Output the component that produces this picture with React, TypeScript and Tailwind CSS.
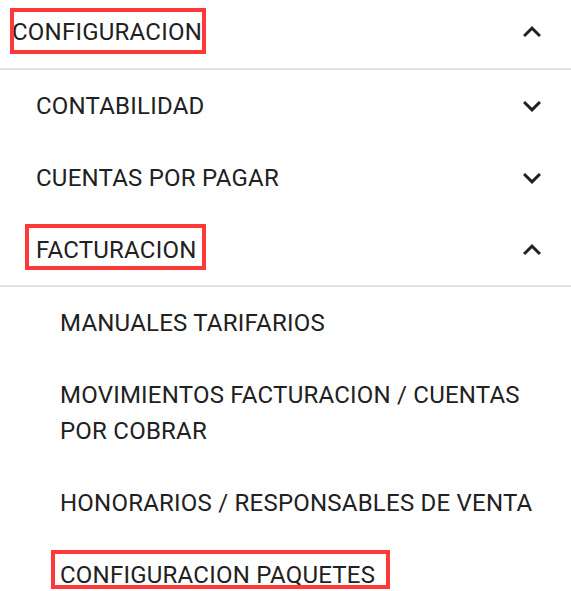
import React from "react";

const Up = () => (
  <svg width="36" height="36" viewBox="0 0 24 24" fill="#212121">
    <path d="M12 8l-6 6 1.41 1.41L12 10.83l4.59 4.58L18 14z" />
  </svg>
);
const Down = () => (
  <svg width="36" height="36" viewBox="0 0 24 24" fill="#212121">
    <path d="M16.59 8.59L12 13.17 7.41 8.59 6 10l6 6 6-6z" />
  </svg>
);

const Boxed = ({ children, cls }: { children: React.ReactNode; cls: string }) => (
  <span className="relative inline-block">
    {children}
    <span className={`pointer-events-none absolute border-4 border-[#ff3838] ${cls}`} />
  </span>
);

export default function App() {
  return (
    <div
      className="w-[571px] h-[591px] overflow-hidden bg-white text-[#212121] text-[24px] leading-[36px] tracking-[0.00938em]"
      style={{ fontFamily: "Roboto, 'Liberation Sans', sans-serif" }}
    >
      <div className="flex items-center justify-between pl-[12px] pr-[21px] h-[68px] pb-[4px]">
        <Boxed cls="-left-[2px] w-[196px] -top-[6px] -bottom-[4px]">CONFIGURACION</Boxed>
        <Up />
      </div>
      <div className="h-[2px] bg-[#e2e2e2]" />
      <div className="flex items-center justify-between pl-[36px] pr-[21px] h-[72px]">
        <span>CONTABILIDAD</span>
        <Down />
      </div>
      <div className="flex items-center justify-between pl-[36px] pr-[21px] h-[72px]">
        <span>CUENTAS POR PAGAR</span>
        <Down />
      </div>
      <div className="flex items-center justify-between pl-[36px] pr-[21px] h-[71px]">
        <Boxed cls="-left-[11px] w-[181px] -top-[8px] -bottom-[2px]">FACTURACION</Boxed>
        <Up />
      </div>
      <div className="h-[2px] bg-[#e2e2e2]" />
      <div className="flex flex-col pl-[60px] pr-[36px]">
        <div className="flex items-center h-[72px]">
          <span>MANUALES TARIFARIOS</span>
        </div>
        <div className="flex items-center h-[108px]">
          <span>MOVIMIENTOS FACTURACION / CUENTAS POR COBRAR</span>
        </div>
        <div className="flex items-center h-[72px]">
          <span>HONORARIOS / RESPONSABLES DE VENTA</span>
        </div>
        <div className="flex items-center h-[72px]">
          <Boxed cls="-left-[9px] w-[339px] -top-[7px] bottom-[4px]">CONFIGURACION PAQUETES</Boxed>
        </div>
      </div>
    </div>
  );
}
